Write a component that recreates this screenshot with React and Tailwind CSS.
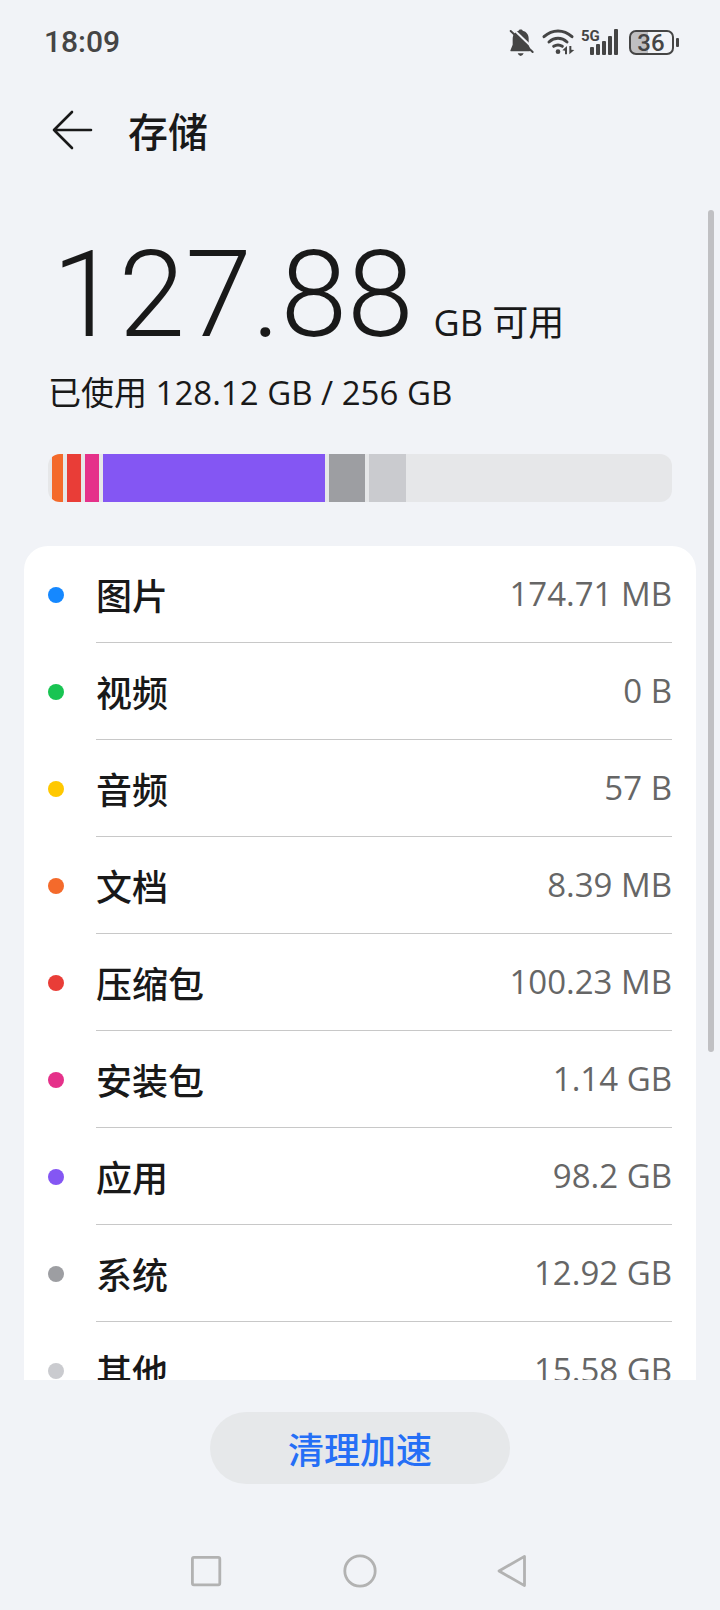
import React from "react";

const categories = [
  { name: "图片", size: "174.71 MB", dot: "bg-[#1588ff]" },
  { name: "视频", size: "0 B", dot: "bg-[#18c452]" },
  { name: "音频", size: "57 B", dot: "bg-[#ffc800]" },
  { name: "文档", size: "8.39 MB", dot: "bg-[#f46a2b]" },
  { name: "压缩包", size: "100.23 MB", dot: "bg-[#e93d37]" },
  { name: "安装包", size: "1.14 GB", dot: "bg-[#e5318a]" },
  { name: "应用", size: "98.2 GB", dot: "bg-[#8456f3]" },
  { name: "系统", size: "12.92 GB", dot: "bg-[#9d9ea2]" },
  { name: "其他", size: "15.58 GB", dot: "bg-[#cacbcf]" },
];

// share of the bar, in percent
const segments = [
  { name: "文档", share: 1.8, color: "bg-[#f46a2b]" },
  { name: "压缩包", share: 2.3, color: "bg-[#e93d37]" },
  { name: "安装包", share: 2.2, color: "bg-[#e5318a]" },
  { name: "应用", share: 35.8, color: "bg-[#8456f3]" },
  { name: "系统", share: 5.8, color: "bg-[#9d9ea2]" },
  { name: "其他", share: 6, color: "bg-[#cacbcf]" },
];

const BellOffIcon = () => (
  <svg width="27" height="30" viewBox="54 50 81 90" fill="#454545">
    <path d="M86 61C86 56 98 56 98 61C110 64 116 73 116 86V103L121 118Q123 123 117 123H65Q59 123 62 118L68 103V86C68 73 74 64 86 61Z" />
    <path d="M83 129H101Q98 137 92 137Q86 137 83 129Z" />
    <path d="M67 54L135 119" stroke="#f1f3f7" strokeWidth="6" />
    <path d="M62 62L128 125" stroke="#454545" strokeWidth="6" strokeLinecap="round" />
  </svg>
);

const WifiIcon = () => (
  <svg width="34" height="30" viewBox="153 50 102 90" fill="none" stroke="#454545">
    <path d="M162 79Q181 62 204 62Q227 62 246 79" strokeWidth="9" strokeLinecap="round" />
    <path d="M177 95Q189 84 204 84Q219 84 231 95" strokeWidth="9" strokeLinecap="round" />
    <path d="M191 108Q204 100 217 108" strokeWidth="9" strokeLinecap="round" />
    <circle cx="204" cy="124" r="7" fill="#454545" stroke="none" />
    <path d="M217 120L231 107V132H225V121ZM253 119L238 132V107H244V118Z" fill="#454545" stroke="none" />
  </svg>
);

const SignalIcon = () => (
  <svg width="39" height="30" viewBox="0 0 39 30" fill="#454545">
    <text x="0" y="14" className="font-['Roboto',sans-serif] text-[15px] font-bold">
      5G
    </text>
    <rect x="9" y="20" width="4" height="8" rx="1" />
    <rect x="15" y="17" width="4" height="11" rx="1" />
    <rect x="21" y="14" width="4" height="14" rx="1" />
    <rect x="27" y="9" width="4" height="19" rx="1" />
    <rect x="33" y="2" width="4" height="26" rx="1" />
  </svg>
);

const BatteryIcon = () => (
  <svg width="54" height="30" viewBox="0 0 54 30" fill="none">
    <path d="M22 4H10Q4 4 4 10V21Q4 27 10 27H22Z" fill="#bfbfc1" />
    <rect x="4" y="4" width="43" height="23" rx="6" stroke="#454545" strokeWidth="2" />
    <rect x="50" y="11" width="3" height="9" rx="1" fill="#454545" />
    <text x="25" y="24" textAnchor="middle" fill="#454545" className="font-['Roboto',sans-serif] text-[24px] font-medium">
      36
    </text>
  </svg>
);

const StatusBar = () => (
  <div className="flex h-[84px] shrink-0 items-center justify-between pl-11 pr-10">
    <span className="font-['Roboto',sans-serif] text-[30px] leading-9 font-medium text-[#454545]">18:09</span>
    <div className="flex items-center gap-1.5">
      <BellOffIcon />
      <WifiIcon />
      <SignalIcon />
      <BatteryIcon />
    </div>
  </div>
);

const Header = () => (
  <header className="mb-[34px] flex h-[92px] shrink-0 items-center gap-8 px-12">
    <button type="button" aria-label="返回">
      <svg width="48" height="48" viewBox="0 0 48 48" fill="none" stroke="#191919" strokeWidth="2.6" strokeLinecap="round" strokeLinejoin="round">
        <path d="M24 6L6 24L24 42M6 24H43" />
      </svg>
    </button>
    <h1 className="text-[40px] leading-[46px] font-medium">存储</h1>
  </header>
);

const UsageBar = () => (
  <div className="mx-12 flex h-12 overflow-hidden rounded-xl bg-[#e6e7e9]">
    <div className="flex w-full gap-1 pl-1">
      {segments.map((item) => (
        <div
          key={item.name}
          className={item.color}
          style={{ width: item.share + "%" }}
        />
      ))}
    </div>
  </div>
);

const CategoryRow = ({ item, last }) => (
  <li className="flex items-center gap-8 px-6">
    <span className={"size-4 shrink-0 rounded-full " + item.dot} />
    <div
      className={
        "flex h-[97px] flex-1 items-center justify-between border-b " +
        (last ? "border-transparent" : "border-[#c8c8c8]")
      }
    >
      <span className="text-[36px] leading-[48px] font-medium">{item.name}</span>
      <span className="font-['Open_Sans',sans-serif] text-[33px] leading-[48px] text-[#666666]">{item.size}</span>
    </div>
  </li>
);

const NavBar = () => (
  <nav className="flex h-20 shrink-0 items-center justify-center gap-[106px]">
    <button type="button" aria-label="最近任务">
      <svg width="48" height="48" viewBox="0 0 48 48" fill="none" stroke="#b2b2b2" strokeWidth="2.8">
        <rect x="10.4" y="11.4" width="27.4" height="27.4" rx="1.5" />
      </svg>
    </button>
    <button type="button" aria-label="主屏幕">
      <svg width="48" height="48" viewBox="0 0 48 48" fill="none" stroke="#b2b2b2" strokeWidth="2.8">
        <circle cx="24" cy="25" r="15.2" />
      </svg>
    </button>
    <button type="button" aria-label="返回上一页">
      <svg width="48" height="48" viewBox="0 0 48 48" fill="none" stroke="#b2b2b2" strokeWidth="2.8" strokeLinejoin="round">
        <path d="M9 25L34.500 10.400V39.600Z" />
      </svg>
    </button>
  </nav>
);

const App = () => {
  return (
    <div className="flex h-screen flex-col bg-[#f1f3f7] font-['Noto_Sans_CJK_SC',sans-serif] text-[#191919]">
      <StatusBar />
      <Header />

      <main className="relative min-h-0 flex-1">
        <div className="h-full overflow-hidden">
          <div className="font-['Open_Sans','Noto_Sans_CJK_SC',sans-serif]">
            <div className="flex items-baseline gap-5 px-[52px] pt-10">
              <span className="font-['Roboto',sans-serif] text-[120px] leading-[90px] font-light">127.88</span>
              <span className="text-[36px] leading-[48px]">GB 可用</span>
            </div>
            <p className="mt-[22px] mb-[37px] px-12 text-[33px] leading-[48px]">已使用 128.12 GB / 256 GB</p>
          </div>

          <UsageBar />

          <ul className="mx-6 mt-11 rounded-3xl bg-white">
            {categories.map((item, index) => (
              <CategoryRow
                key={item.name}
                item={item}
                last={index === categories.length - 1}
              />
            ))}
          </ul>
        </div>

        {/* scroll thumb */}
        <div className="absolute top-0 right-1.5 h-[72%] w-1.5 rounded-full bg-[#c0c0c3]" />
      </main>

      <footer className="flex h-[150px] shrink-0 justify-center pt-8">
        <button
          type="button"
          className="h-[72px] w-[300px] rounded-full bg-[#e6e8ea] text-[36px] leading-[48px] font-medium text-[#256ff6]"
        >
          清理加速
        </button>
      </footer>

      <NavBar />
    </div>
  );
};

export default App;
